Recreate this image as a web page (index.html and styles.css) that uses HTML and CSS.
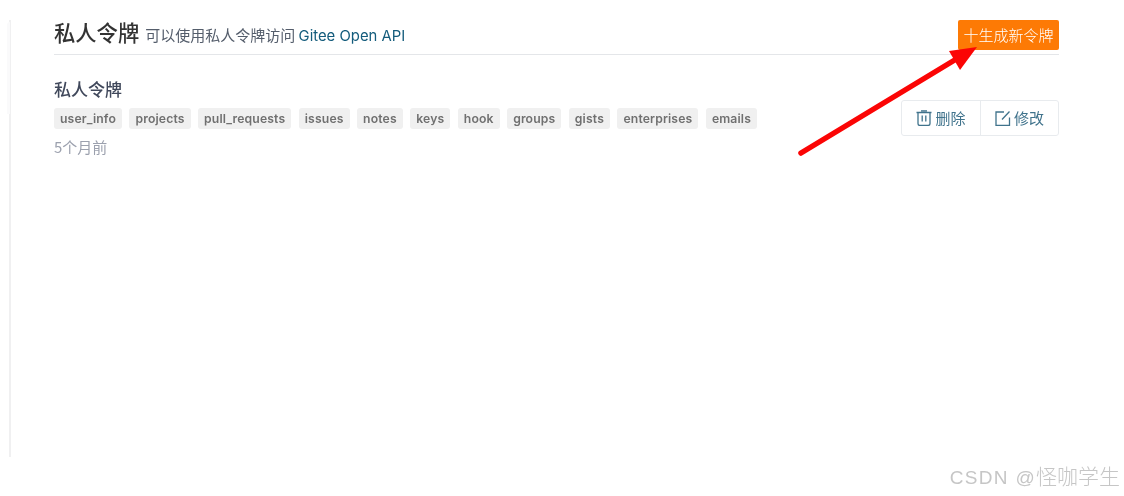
FILE: index.html
```html
<!DOCTYPE html>
<html lang="zh">
<head>
<meta charset="utf-8">
<title>私人令牌</title>
<link rel="stylesheet" href="styles.css">
</head>
<body>
<div class="page">
  <div class="panel">
    <span class="panel-notch"></span>
    <div class="content">
      <header class="head">
        <div class="head-text">
          <h1 class="title">私人令牌</h1>
          <span class="sub">可以使用私人令牌访问 <a class="link">Gitee Open API</a></span>
        </div>
        <a class="new-btn">十生成新令牌</a>
      </header>
      <section class="token">
        <div class="token-main">
          <h2 class="token-name">私人令牌</h2>
          <div class="tags">
            <span class="tag">user_info</span>
            <span class="tag">projects</span>
            <span class="tag">pull_requests</span>
            <span class="tag">issues</span>
            <span class="tag">notes</span>
            <span class="tag">keys</span>
            <span class="tag">hook</span>
            <span class="tag">groups</span>
            <span class="tag">gists</span>
            <span class="tag">enterprises</span>
            <span class="tag">emails</span>
          </div>
          <div class="time">5个月前</div>
        </div>
        <div class="actions">
          <a class="act">
            <svg class="ico" viewBox="0 0 16 16" fill="none" stroke="#40738c" stroke-width="1.3"><path d="M.5 2.5h15M2 2.5v11a2 2 0 0 0 2 2h8a2 2 0 0 0 2-2v-11M5 .8h6M6.2 5.5v6M9.8 5.5v6"/></svg>
            <span class="act-label">删除</span>
          </a>
          <a class="act">
            <svg class="ico" viewBox="0 0 16 16" fill="none" stroke="#40738c" stroke-width="1.3"><path d="M9 2H1v13.3h13.5V7.5M7 9.5 14.5 1.5"/></svg>
            <span class="act-label">修改</span>
          </a>
        </div>
      </section>
    </div>
  </div>
  <svg class="arrow" viewBox="0 0 1124 496" width="1124" height="496">
    <path d="M801 153 L958 58" stroke="#fb0505" stroke-width="5.5" stroke-linecap="round" fill="none"/>
    <path d="M977 47 L949 51 L960 70 Z" fill="#fb0505"/>
  </svg>
  <div class="mark"><span class="mark-latin">CSDN @</span>怪咖学生</div>
</div>
</body>
</html>
```
FILE: styles.css
```css
* { box-sizing: border-box; }
html, body { margin: 0; background: #fff; }
body {
  font-family: "Liberation Sans", "Noto Sans CJK SC", sans-serif;
  width: 1124px;
  height: 496px;
  overflow: hidden;
}
.page { position: relative; width: 1124px; height: 496px; padding: 20px 0 0 9px; filter: blur(0.45px); }
.panel {
  position: relative;
  width: 1050px;
  height: 437px;
  border-left: 2px solid #f0f0f1;
  padding-left: 43px;
}
.panel-notch {
  position: absolute;
  left: -4px;
  top: 2px;
  width: 3px;
  height: 92px;
  background: #fafafb;
  border-top-left-radius: 3px;
}
.content { width: 1005px; }
.head {
  display: flex;
  justify-content: space-between;
  align-items: flex-start;
  height: 35px;
  border-bottom: 1px solid #e4e6e9;
}
.head-text { display: flex; align-items: baseline; height: 30px; line-height: 23px; }
.title { margin: 0 6px 0 0; font-size: 21.3px; font-weight: 500; color: #333; font-family: "Noto Sans CJK SC", sans-serif; }
.sub { font-size: 15px; color: #545d6b; font-family: "Noto Sans CJK SC", sans-serif; }
.link { color: #145c7c; font-family: "Inter", "Liberation Sans", sans-serif; font-size: 14.85px; }
.new-btn {
  width: 101px;
  height: 30px;
  background: #fd7a05;
  border-radius: 2px;
  color: #fff;
  font-size: 15px;
  line-height: 29px;
  text-align: center;
  white-space: nowrap;
  font-family: "Noto Sans CJK SC", sans-serif;
  font-weight: 300;
}
.token { display: flex; justify-content: space-between; align-items: flex-start; padding-top: 23px; }
.token-name { margin: 0; font-size: 17px; line-height: 22px; font-weight: 500; color: #40485b; font-family: "Noto Sans CJK SC", sans-serif; }
.tags { display: flex; gap: 7.5px; margin-top: 8px; }
.tag {
  height: 21px;
  padding: 0 6px;
  background: #f0f0f0;
  border-radius: 3px;
  font-family: "Inter", "Liberation Sans", sans-serif;
  font-size: 12.2px;
  font-weight: 600;
  line-height: 21px;
  color: #707070;
  letter-spacing: 0.14px;
}
.time { margin-top: 8px; font-size: 15px; line-height: 20px; color: #9ca1ae; font-family: "Noto Sans CJK SC", sans-serif; }
.actions {
  display: flex;
  height: 36px;
  border: 1px solid #e8ebee;
  border-radius: 3px;
  margin-top: 22px;
}
.act {
  display: flex;
  align-items: center;
  justify-content: center;
  gap: 3px;
  width: 78px;
  color: #40738c;
  font-size: 15px;
  font-family: "Noto Sans CJK SC", sans-serif;
}
.act-label { line-height: 32px; height: 32px; }
.act + .act { border-left: 1px solid #e8ebee; }
.ico { width: 16px; height: 16px; }
.arrow { position: absolute; left: 0; top: 0; }
.mark {
  position: absolute;
  right: 4px;
  top: 461px;
  font-size: 21px;
  line-height: 28px;
  color: #c6c6c6;
  font-family: "Noto Sans CJK SC", sans-serif;
  font-weight: 300;
  white-space: nowrap;
}
.mark-latin { font-family: "Liberation Sans", sans-serif; font-size: 19px; letter-spacing: 1.3px; }
```
